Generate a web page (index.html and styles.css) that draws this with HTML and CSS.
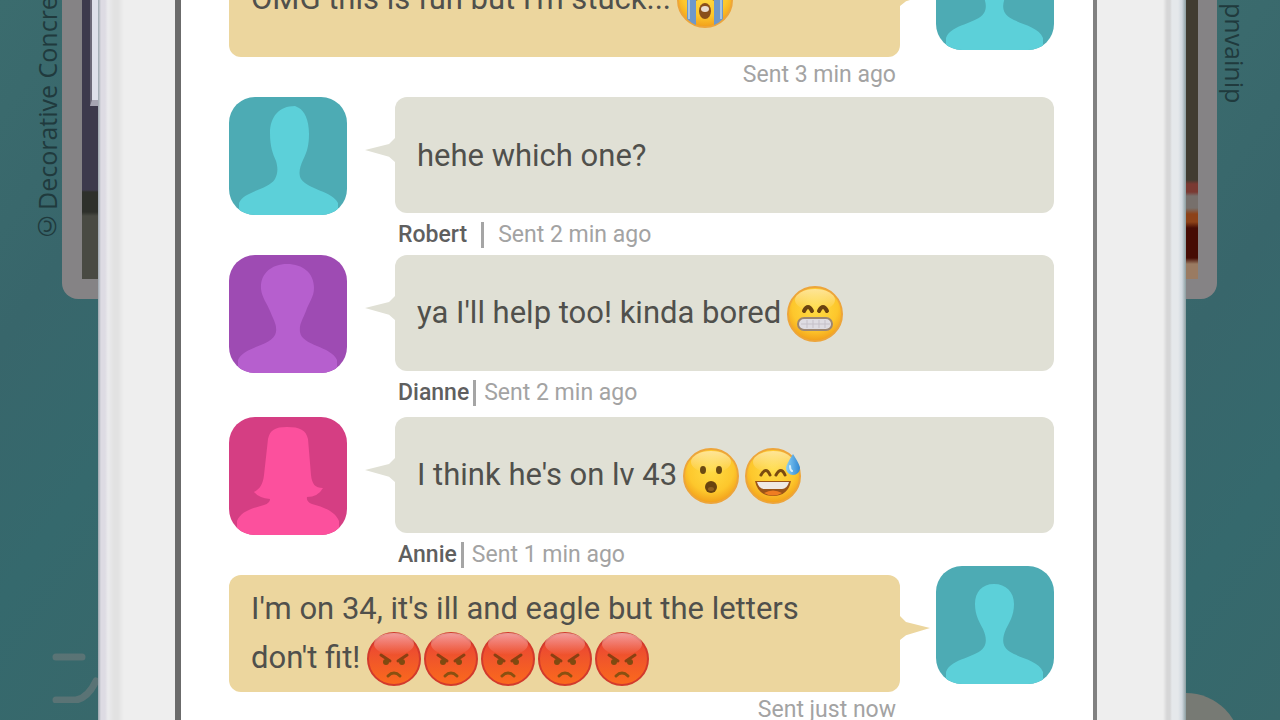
FILE: index.html
```html
<!DOCTYPE html>
<html lang="en">
<head>
<meta charset="utf-8">
<meta name="viewport" content="width=device-width, initial-scale=1">
<title>Chat</title>
<link rel="stylesheet" href="styles.css">
</head>
<body>
<svg class="defs" width="0" height="0" aria-hidden="true">
  <defs>
    <radialGradient id="gold" cx="50%" cy="38%" r="60%">
      <stop offset="0" stop-color="#ffdc45"/><stop offset=".7" stop-color="#fdc72c"/><stop offset="1" stop-color="#f3a31c"/>
    </radialGradient>
    <linearGradient id="gloss" x1="0" y1="0" x2="0" y2="1">
      <stop offset="0" stop-color="#fff" stop-opacity=".5"/><stop offset="1" stop-color="#fff" stop-opacity="0"/>
    </linearGradient>
    <linearGradient id="red" x1="0" y1="0" x2="0" y2="1">
      <stop offset="0" stop-color="#e93c38"/><stop offset=".5" stop-color="#f0562a"/><stop offset="1" stop-color="#fb6a1c"/>
    </linearGradient>
    <linearGradient id="drop" x1="0" y1="0" x2="1" y2="0">
      <stop offset="0" stop-color="#8ad0f5"/><stop offset="1" stop-color="#2f87d3"/>
    </linearGradient>
  </defs>
  <symbol id="face" viewBox="0 0 56 56">
    <circle cx="28" cy="28" r="27" fill="url(#gold)" stroke="#eda53a" stroke-width="2"/>
    <ellipse cx="28" cy="14" rx="20" ry="11" fill="url(#gloss)"/>
  </symbol>
  <symbol id="cry" viewBox="0 0 56 56">
    <use href="#face"/>
    <path d="M10 25q6 5 13 0M33 25q7 5 13 0" fill="none" stroke="#6b4515" stroke-width="3"/>
    <path d="M10 27h9v26q-5-2-9-6zM37 27h9v20q-4 4-9 6z" fill="#6d98cb"/>
    <path d="M12 28v19M44 28v19" stroke="#a5c3e2" stroke-width="2"/>
    <ellipse cx="28" cy="39" rx="6" ry="8" fill="#8a501a"/>
    <ellipse cx="28" cy="37" rx="4" ry="3" fill="#e9ddcf"/>
  </symbol>
  <symbol id="grimace" viewBox="0 0 56 56">
    <use href="#face"/>
    <path d="M17 25q4-8 8 0M32 25q4-8 8 0" fill="none" stroke="#6b4310" stroke-width="4" stroke-linecap="round"/>
    <rect x="11" y="32" width="34" height="12" rx="6" fill="#dedce2" stroke="#9c8671" stroke-width="2"/>
    <path d="M14 38h29M20 34v8M26 34v8M32 34v8M38 34v8" stroke="#c5c0c8"/>
  </symbol>
  <symbol id="wow" viewBox="0 0 56 56">
    <use href="#face"/>
    <ellipse cx="20" cy="22" rx="3" ry="4" fill="#6b4a12"/><ellipse cx="36" cy="22" rx="3" ry="4" fill="#6b4a12"/>
    <ellipse cx="28" cy="39" rx="6" ry="6" fill="#67420f"/><ellipse cx="28" cy="41" rx="3" ry="2" fill="#8c5e20"/>
  </symbol>
  <symbol id="sweat" viewBox="0 0 56 56">
    <use href="#face"/>
    <path d="M16 27q5-9 9 0M31 27q5-9 9 0" fill="none" stroke="#7a4b10" stroke-width="3" stroke-linecap="round"/>
    <path d="M10 33h36q-3 15-18 15T10 33z" fill="#9b5418"/>
    <path d="M12 34h32q-2 7-7 7H19q-5 0-7-7z" fill="#efe9e4"/>
    <path d="M19 45q9-5 18 0-9 5-18 0z" fill="#ef7d22"/>
    <path d="M48 6q7 11 7 14a7 7 0 0 1-14 0q0-3 7-14z" fill="url(#drop)"/>
    <path d="M45 18q0 4 2 5" fill="none" stroke="#d5effc" stroke-width="2" stroke-linecap="round"/>
  </symbol>
  <symbol id="angry" viewBox="0 0 56 56">
    <circle cx="28" cy="28" r="26" fill="url(#red)" stroke="#d23a2c" stroke-width="2"/>
    <ellipse cx="28" cy="13" rx="20" ry="11" fill="url(#gloss)"/>
    <path d="M15 24l9 6M41 24l-9 6" stroke="#8a4012" stroke-width="3" stroke-linecap="round"/>
    <ellipse cx="20" cy="31" rx="3" ry="3" fill="#7f4a10"/><ellipse cx="36" cy="31" rx="3" ry="3" fill="#7f4a10"/>
    <path d="M22 45q6-6 12 0" fill="none" stroke="#8a5010" stroke-width="3" stroke-linecap="round"/>
  </symbol>
  <symbol id="me" viewBox="0 0 118 118">
    <path d="M58 18C46 18 39 26 39 38C39 50 44 57 47 63C50 70 51 76 48 81C41 92 15 92 10 106V118H107V106C102 92 76 92 69 81C66 76 67 70 70 63C73 57 78 50 78 38C78 26 70 18 58 18Z"/>
  </symbol>
  <symbol id="robert" viewBox="0 0 118 118">
    <path d="M66 9C50 9 41 20 41 36C41 50 44 57 47 64C49 71 49 76 46 82C39 93 15 94 10 106V118H109V106C103 94 80 93 72 82C69 76 71 70 74 63C78 55 80 48 80 37C80 22 75 14 70 11Z"/>
  </symbol>
  <symbol id="dianne" viewBox="0 0 118 118">
    <path d="M58 9C42 9 31 19 32 34C33 43 38 48 41 56C44 64 48 69 47 77C45 91 15 91 9 105V118H108V105C102 91 73 91 71 77C70 69 74 64 77 56C80 47 85 42 85 33C85 18 74 9 58 9Z"/>
  </symbol>
  <symbol id="annie" viewBox="0 0 118 118">
    <path d="M58 10C46 10 41 13 39 22L35 58C34 67 31 72 25 75Q30 81 41 82Q41 86 35 88C24 91 12 94 8 104V118H110V104C106 94 94 90 83 87Q77 85 78 80Q89 80 94 71C86 71 83 67 82 58L79 22C77 13 71 10 58 10Z"/>
  </symbol>
</svg>

<div class="scene">
  <aside class="side side-left">
    <p class="credit credit-up">©Decorative Concrete</p>
    <div class="frame frame-left"><div class="photo photo-left"><span class="pole"></span></div></div>
    <svg class="mark" viewBox="0 0 46 52" aria-hidden="true"><path d="M4 6H30M4 49H24Q36 47 44 30" fill="none" stroke="#69797a" stroke-width="7" stroke-linecap="round"/></svg>
  </aside>

  <main class="phone">
    <section class="screen" aria-label="Group chat">
      <ol class="thread">
        <li class="message sent">
          <div class="row">
            <div class="bubble"><p>OMG this is fun but I'm stuck...<svg class="emoji spaced" role="img" aria-label="crying"><use href="#cry"/></svg></p></div>
            <svg class="avatar teal" role="img" aria-label="Me"><use href="#me"/></svg>
          </div>
          <p class="meta">Sent 3 min ago</p>
        </li>
        <li class="message received">
          <div class="row">
            <svg class="avatar teal" role="img" aria-label="Robert"><use href="#robert"/></svg>
            <div class="bubble"><p>hehe which one?</p></div>
          </div>
          <p class="meta wide"><span class="name">Robert</span><time>Sent 2 min ago</time></p>
        </li>
        <li class="message received">
          <div class="row">
            <svg class="avatar purple" role="img" aria-label="Dianne"><use href="#dianne"/></svg>
            <div class="bubble"><p>ya I'll help too! kinda bored<svg class="emoji spaced" role="img" aria-label="grimacing"><use href="#grimace"/></svg></p></div>
          </div>
          <p class="meta"><span class="name">Dianne</span><time>Sent 2 min ago</time></p>
        </li>
        <li class="message received apart">
          <div class="row">
            <svg class="avatar pink" role="img" aria-label="Annie"><use href="#annie"/></svg>
            <div class="bubble"><p>I think he's on lv 43<svg class="emoji spaced" role="img" aria-label="surprised"><use href="#wow"/></svg><svg class="emoji spaced" role="img" aria-label="sweating smile"><use href="#sweat"/></svg></p></div>
          </div>
          <p class="meta"><span class="name">Annie</span><time>Sent 1 min ago</time></p>
        </li>
        <li class="message sent">
          <div class="row">
            <div class="bubble"><p>I'm on 34, it's ill and eagle but the letters<br>don't fit!<svg class="emoji spaced" role="img" aria-label="angry"><use href="#angry"/></svg><svg class="emoji" role="img" aria-label="angry"><use href="#angry"/></svg><svg class="emoji" role="img" aria-label="angry"><use href="#angry"/></svg><svg class="emoji" role="img" aria-label="angry"><use href="#angry"/></svg><svg class="emoji" role="img" aria-label="angry"><use href="#angry"/></svg></p></div>
            <svg class="avatar teal" role="img" aria-label="Me"><use href="#me"/></svg>
          </div>
          <p class="meta">Sent just now</p>
        </li>
      </ol>
    </section>
  </main>

  <aside class="side side-right">
    <div class="frame frame-right"><div class="photo photo-right"></div></div>
    <p class="credit credit-down">pnvainip</p>
    <span class="disc"></span>
  </aside>
</div>
</body>
</html>
```
FILE: styles.css
```css
* { box-sizing: border-box; }

body {
  margin: 0;
  background: #38686b;
  color: #50504c;
  font-family: Roboto, "Noto Sans", sans-serif;
}

p, ol { margin: 0; padding: 0; }

.defs { position: absolute; }

.scene {
  display: grid;
  grid-template: 100% / 98px 1fr 94px;
  height: 100vh;
  overflow: hidden;
}

/* Backdrop on both sides of the phone */
.side {
  position: relative;
  display: flex;
  align-items: flex-start;
  overflow: hidden;
  background: linear-gradient(125deg, #3b6c6e, #38666b 40%, #35696d 70%, #38686b);
}

.side-left { justify-content: flex-end; gap: 2px; }
.side-right { gap: 5px; }

.credit {
  writing-mode: vertical-rl;
  white-space: nowrap;
  color: #203a3d;
  font: 500 25px/26px "Open Sans", sans-serif;
}

.credit-up { height: 244px; transform: rotate(180deg); }

.credit-down {
  display: flex;
  justify-content: flex-end;
  height: 103px;
}

.frame { height: 299px; padding-bottom: 20px; background: #858385; }
.frame-left { width: 36px; padding-left: 20px; border-bottom-left-radius: 16px; }
.frame-right { width: 31px; padding-right: 19px; border-bottom-right-radius: 16px; }

.photo { height: 100%; }

.photo-left { background: linear-gradient(#3d3a4c 0 190px, #2e302b 192px 212px, #494a43 216px); }
.photo-right { background: linear-gradient(#413c31 0 180px, #7a3a32 184px 192px, #77706c 196px 208px, #8d4218 214px 222px, #460c04 228px 258px, #9a7b62 264px); }

.pole {
  display: block;
  width: 8px;
  height: 106px;
  margin-left: auto;
  background: #dfe0ea;
  border-left: 2px solid #6c6978;
  border-bottom: 6px solid #a6a5b2;
}

.mark { position: absolute; left: 52px; bottom: 17px; width: 46px; height: 52px; opacity: .7; }

.disc {
  position: absolute;
  left: -55px;
  bottom: -83px;
  width: 110px;
  height: 110px;
  border-radius: 50%;
  background: #777a74;
}

/* Phone body */
.phone {
  display: flex;
  padding: 0 89px 0 77px;
  background:
    linear-gradient(to right, #9ba6ae 0, #dddbe3 3px 7px, #ebebed 10px, #e2e2e2 16px 20px, #eee 26px, transparent 40px) left / 50% 100% no-repeat,
    linear-gradient(to left, #8c9ea1 0, #d0d8df 4px, #e5e8eb 8px 14px, #d6d6d7 16px 19px, #eee 23px, transparent 40px) right / 50% 100% no-repeat,
    #eee;
}

.screen {
  flex: 1;
  min-width: 0;
  overflow: hidden;
  background: #fff;
  border-left: 6px solid #6b6b6b;
  border-right: 4px solid #808080;
}

/* Thread, scrolled partly past its first message */
.thread {
  margin-top: -59px;
  padding: 0 39px 0 48px;
  list-style: none;
}

.row { display: flex; align-items: flex-start; }
.received .row { gap: 48px; }
.sent .row { gap: 36px; }
.apart { margin-top: 4px; }

.avatar {
  flex: none;
  width: 118px;
  height: 118px;
  margin-bottom: -2px;
  border-radius: 26px;
}

.sent .avatar { margin-top: -9px; }
.teal { background: #4dabb4; fill: #5cd0d9; }
.purple { background: #9e4bb3; fill: #b65fce; }
.pink { background: #d53e83; fill: #fc509d; }

.bubble {
  position: relative;
  flex: 1;
  display: flex;
  align-items: center;
  min-height: 116px;
  padding: 9px 22px;
  border-radius: 12px;
  font-size: 31px;
  line-height: 49px;
}

.received .bubble { background: #e0e0d5; }
.sent .bubble { background: #ecd69e; }

.bubble::after {
  content: "";
  position: absolute;
  top: 41px;
  width: 30px;
  height: 24px;
  background: inherit;
}

.received .bubble::after { right: 100%; clip-path: polygon(100% 0, 80% 25%, 0 50%, 80% 78%, 100% 100%); }
.sent .bubble::after { left: 100%; clip-path: polygon(0 0, 20% 25%, 100% 50%, 20% 80%, 0 100%); }

.emoji {
  width: 56px;
  height: 56px;
  margin: -6px 0 -4px 1px;
  vertical-align: middle;
}

.emoji.spaced { margin-left: 6px; }

.meta {
  display: flex;
  align-items: center;
  color: #a3a3a3;
  font-size: 23px;
}

.sent .meta {
  justify-content: flex-end;
  padding: 0 158px 4px 0;
  line-height: 36px;
}

.received .meta {
  gap: 8px;
  padding: 2px 0 0 169px;
  line-height: 40px;
}

.received .wide { gap: 14px; }

.name {
  display: flex;
  align-items: center;
  gap: 4px;
  color: #5f5f5f;
  font-weight: 500;
}

.name::after {
  content: "";
  width: 3px;
  height: 26px;
  background: #a5a5a5;
}

.wide .name { gap: 14px; }
```
